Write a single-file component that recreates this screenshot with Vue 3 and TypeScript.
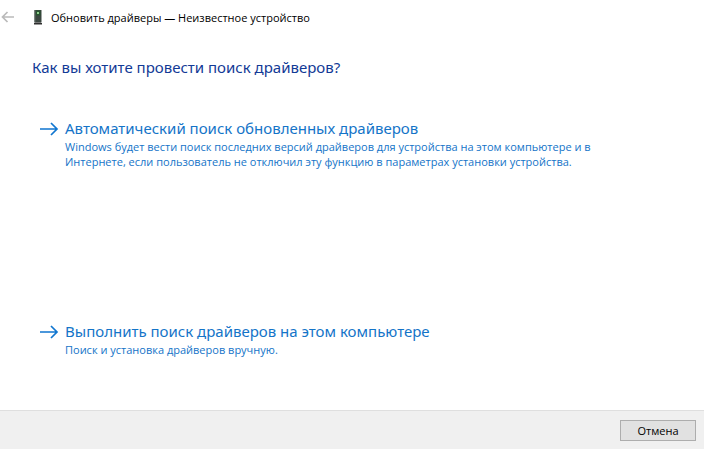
<script setup lang="ts">
interface SearchOption {
  id: string
  title: string
  description: string
}

const options: SearchOption[] = [
  {
    id: 'auto',
    title: 'Автоматический поиск обновленных драйверов',
    description:
      'Windows будет вести поиск последних версий драйверов для устройства на этом компьютере и в Интернете, если пользователь не отключил эту функцию в параметрах установки устройства.',
  },
  {
    id: 'manual',
    title: 'Выполнить поиск драйверов на этом компьютере',
    description: 'Поиск и установка драйверов вручную.',
  },
]
</script>

<template>
  <div class="wizard">
    <header class="titlebar">
      <button class="back" type="button" aria-label="Назад" disabled>
        <svg width="14" height="12" viewBox="0 0 14 12" fill="none" stroke="#bababa" stroke-width="1.7">
          <path d="M14 6H3M7.5 1L2.5 6l5 5" />
        </svg>
      </button>
      <svg class="device" width="10" height="16" viewBox="0 0 10 16" aria-hidden="true">
        <path d="M1.5 1h7v12.5h-7z" fill="#3b4640" />
        <path d="M1.5 1h1v12.5h-1z" fill="#59645c" />
        <path d="M3 1.5h4.5v5H3z" fill="#28532f" />
        <path d="M4 3h2v2H4z" fill="#8fd08c" />
        <path d="M2 13h6v1H2z" fill="#777" />
        <path d="M1 14h8v1.5H1z" fill="#303030" />
      </svg>
      <span class="caption">Обновить драйверы — Неизвестное устройство</span>
    </header>

    <main class="content">
      <h1 class="heading">Как вы хотите провести поиск драйверов?</h1>
      <div class="options">
        <button v-for="option in options" :key="option.id" class="option" type="button">
          <svg class="arrow" width="19" height="14" viewBox="0 0 19 14" fill="none" stroke="#1076d0" stroke-width="1.7" aria-hidden="true">
            <path d="M0 7h17M11 1l6 6-6 6" />
          </svg>
          <span class="text">
            <span class="title">{{ option.title }}</span>
            <span class="description">{{ option.description }}</span>
          </span>
        </button>
      </div>
    </main>

    <footer class="footer">
      <button class="cancel" type="button">Отмена</button>
    </footer>
  </div>
</template>

<style>
body {
  margin: 0;
  background: #fff;
}
</style>

<style scoped>
.wizard {
  display: flex;
  flex-direction: column;
  min-height: 100vh;
  font-family: "Open Sans", "Noto Sans", sans-serif;
  font-size: 11px;
  line-height: 15px;
  color: #000;
}

button {
  font: inherit;
  color: inherit;
}

.titlebar {
  display: flex;
  align-items: center;
  height: 34px;
}

.back {
  display: flex;
  padding: 0;
  margin-right: 19px;
  border: 0;
  background: none;
}

.device {
  margin-right: 8px;
}

.content {
  flex: 1;
  padding: 21px 32px 0;
}

.heading {
  margin: 0;
  font-family: "Noto Sans", "Open Sans", sans-serif;
  font-size: 15px;
  font-weight: 400;
  line-height: 24px;
  color: #123a96;
}

.options {
  display: grid;
  gap: 151px;
  margin-top: 38px;
}

.option {
  display: flex;
  align-items: flex-start;
  gap: 6px;
  padding: 0 8px;
  border: 0;
  background: none;
  text-align: left;
  color: #1474c8;
}

.arrow {
  flex: none;
  margin-top: 5px;
}

.text {
  display: flex;
  flex-direction: column;
  max-width: 560px;
}

.title {
  font-family: "Noto Sans", "Open Sans", sans-serif;
  font-size: 15px;
  line-height: 22px;
}

.footer {
  display: flex;
  justify-content: flex-end;
  padding: 9px 8px 8px;
  border-top: 1px solid #dfdfdf;
  background: #f0f0f0;
}

.cancel {
  width: 76px;
  height: 21px;
  padding: 0;
  border: 1px solid #adadad;
  background: #e1e1e1;
  line-height: 19px;
}
</style>
